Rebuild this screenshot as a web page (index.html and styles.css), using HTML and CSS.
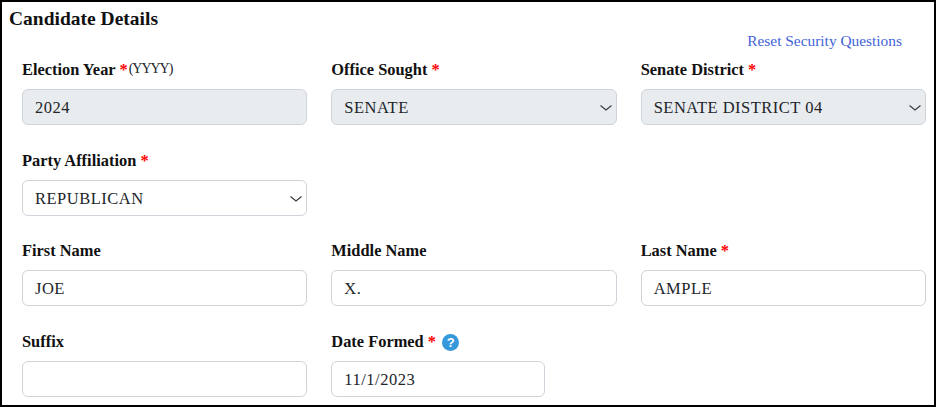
FILE: index.html
```html
<!DOCTYPE html>
<html lang="en">
<head>
    <meta charset="UTF-8">
    <title>Candidate Details</title>
    <link rel="stylesheet" href="styles.css">
</head>
<body>
    <div class="panel">
        <h2 class="panel-title">Candidate Details</h2>
        <div class="reset-row"><a href="#" class="reset-link">Reset Security Questions</a></div>
        <form class="form-grid">
            <div class="field">
                <label>Election Year <span class="req">*</span><span class="hint">(YYYY)</span></label>
                <div class="control disabled">2024</div>
            </div>
            <div class="field">
                <label>Office Sought <span class="req">*</span></label>
                <div class="control disabled select">SENATE
                    <svg class="chevron" viewBox="0 0 12 6"><path d="M0.5 0.5l5.5 4.5 5.5-4.5" /></svg>
                </div>
            </div>
            <div class="field">
                <label>Senate District <span class="req">*</span></label>
                <div class="control disabled select">SENATE DISTRICT 04
                    <svg class="chevron" viewBox="0 0 12 6"><path d="M0.5 0.5l5.5 4.5 5.5-4.5" /></svg>
                </div>
            </div>

            <div class="field">
                <label>Party Affiliation <span class="req">*</span></label>
                <div class="control select">REPUBLICAN
                    <svg class="chevron" viewBox="0 0 12 6"><path d="M0.5 0.5l5.5 4.5 5.5-4.5" /></svg>
                </div>
            </div>
            <div class="field"></div>
            <div class="field"></div>

            <div class="field">
                <label>First Name</label>
                <div class="control">JOE</div>
            </div>
            <div class="field">
                <label>Middle Name</label>
                <div class="control">X.</div>
            </div>
            <div class="field">
                <label>Last Name <span class="req">*</span></label>
                <div class="control">AMPLE</div>
            </div>

            <div class="field">
                <label>Suffix</label>
                <div class="control"></div>
            </div>
            <div class="field">
                <label>Date Formed <span class="req">*</span> <span class="help">?</span></label>
                <div class="control date">11/1/2023</div>
            </div>
        </form>
    </div>
</body>
</html>
```
FILE: styles.css
```css
html, body {
    margin: 0;
    height: 100%;
    background-color: #fff;
}

body {
    font-family: "Liberation Serif", serif;
    color: #212529;
    overflow: hidden;
}

.panel {
    box-sizing: border-box;
    height: 407px;
    border: 2px solid #000;
    padding: 7px 8px 0 7px;
    overflow: hidden;
}

.panel-title {
    margin: 0;
    font-size: 19.5px;
    line-height: 20px;
    font-weight: bold;
    color: #111;
}

.reset-row {
    display: flex;
    justify-content: flex-end;
    padding: 4px 24px 0 0;
}

.reset-link {
    font-size: 15.4px;
    line-height: 16px;
    color: #3f63d8;
    text-decoration: none;
}

.form-grid {
    display: grid;
    grid-template-columns: repeat(3, 1fr);
    grid-auto-rows: 90.5px;
    column-gap: 24px;
    padding: 11px 0 0 13px;
}

.field label {
    display: block;
    height: 20px;
    margin-bottom: 9px;
    font-size: 16.4px;
    line-height: 20px;
    font-weight: bold;
    color: #111;
}

.req {
    color: #f00;
}

.hint {
    font-weight: normal;
    font-size: 14px;
    letter-spacing: -1px;
    color: #212529;
    position: relative;
    top: -2px;
    margin-left: 1px;
}

.help {
    display: inline-block;
    width: 17px;
    height: 17px;
    margin-left: 2px;
    border-radius: 50%;
    background-color: #3498db;
    color: #fff;
    font-family: "Liberation Sans", sans-serif;
    font-size: 13px;
    font-weight: bold;
    line-height: 17px;
    text-align: center;
}

.control {
    box-sizing: border-box;
    position: relative;
    height: 36px;
    padding: 0 12px;
    border: 1px solid #ced4da;
    border-radius: 6px;
    background-color: #fff;
    font-size: 16.5px;
    line-height: 36px;
    letter-spacing: 0.5px;
    color: #212529;
}

.disabled {
    background-color: #e9ecef;
}

.date {
    width: 214px;
}

.chevron {
    position: absolute;
    top: 15px;
    right: 4px;
    width: 12px;
    height: 6px;
    fill: none;
    stroke: #343a40;
    stroke-width: 1.1;
}
```
